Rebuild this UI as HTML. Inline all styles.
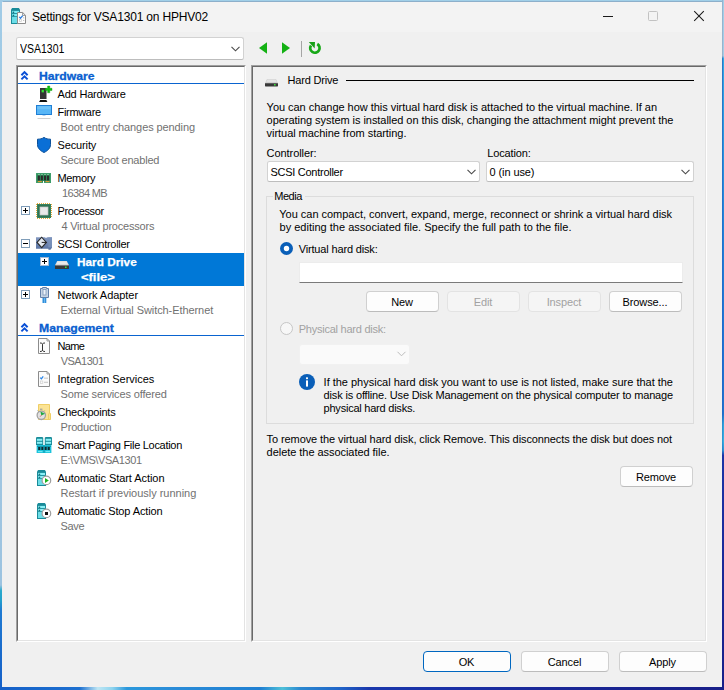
<!DOCTYPE html>
<html lang="en">
<head>
<meta charset="utf-8">
<title>Settings for VSA1301 on HPHV02</title>
<style>
html,body{margin:0;padding:0;}
body{width:724px;height:690px;overflow:hidden;position:relative;background:#1d59c0;font-family:"Liberation Sans",sans-serif;font-size:11px;color:#000;}
.a,.t,.s,.b,svg{position:absolute;}
svg{overflow:visible;}
#dtop{left:0;top:0;width:724px;height:3px;background:linear-gradient(180deg,#a0cfe8 0,#a0cfe8 1px,#8dafca 1px,#8dafca 2px);}
#dleft{left:0;top:0;width:3px;height:690px;background:linear-gradient(180deg,#a0cbe6 0%,#a3c8e2 50%,#9cc3e0 84.8%,#2aa9cc 85.6%,#22a0cc 87%,#1f7ad2 88.5%,#1a6ccc 94%,#1560c8 100%);}
#dright{left:722px;top:0;width:1px;height:690px;background:linear-gradient(180deg,#93b4d0 0%,#98b4cc 8.1%,#2a78c6 8.5%,#2272cc 30%,#1f68cc 52%,#206ac8 60%,#2c90d0 61.5%,#2c98d4 64%,#2880cc 65.3%,#1c34a6 66%,#1a2a9a 80%,#181f88 100%);}
#dright2{left:723px;top:0;width:1px;height:690px;background:linear-gradient(180deg,#a0cfe8 0%,#a4cce6 8.1%,#2eaae6 8.5%,#2a98e0 20%,#2080d8 36%,#1f74d2 52%,#2074cc 60%,#30a4dc 61.5%,#38b0e0 64%,#2a90d4 65.3%,#1c34a6 66%,#1a2a9a 80%,#181f88 100%);}
#dbot{left:0;top:686px;width:724px;height:4px;background:linear-gradient(90deg,#1560c8 0%,#1d70d0 11%,#bfe6f4 13.5%,#8fd4ee 15.5%,#2b98dc 17.5%,#2a8cd8 24%,#2080d2 36%,#4fc0d8 39%,#2a88d0 41.5%,#2064c8 47%,#1a38ac 51%,#1a30a6 62%,#1a2898 75%,#181f88 100%);}
#win{left:2px;top:2px;width:720px;height:685px;background:#f0f0f0;}
#tbar{left:2px;top:2px;width:720px;height:30px;background:#f3f3f3;}
.t{white-space:nowrap;line-height:13px;height:13px;}
.s{white-space:nowrap;line-height:13px;height:13px;color:#717171;}
.hd{color:#0a5fd0;font-weight:bold;-webkit-text-stroke:0.3px #0a5fd0;}
.sunk{box-sizing:border-box;border:1px solid;border-color:#a0a0a0 #fff #fff #a0a0a0;}
.sunk>i{position:absolute;left:0;top:0;right:0;bottom:0;border:1px solid;border-color:#696969 #e3e3e3 #e3e3e3 #696969;}
.b{box-sizing:border-box;border:1px solid #d0d0d0;border-bottom-color:#bcbcbc;border-radius:4px;background:#fdfdfd;text-align:center;line-height:19px;padding-top:1px;padding-right:1px;height:21px;white-space:nowrap;letter-spacing:-0.12px;}
.b.dis{color:#a2a2a2;background:#f5f5f5;border-color:#e3e3e3;}
.cb{box-sizing:border-box;border:1px solid #d2d2d2;border-bottom-color:#bdbdbd;border-radius:2.5px;background:#fff;}
</style>
</head>
<body>
<div id="dtop" class="a"></div><div id="dleft" class="a"></div><div id="dright" class="a"></div><div id="dright2" class="a"></div><div id="dbot" class="a"></div>
<div id="win" class="a"></div>
<div id="tbar" class="a"></div>

<!-- VM combo -->
<div class="a cb" style="left:16px;top:37px;width:228px;height:23px;"></div>

<!-- tree panel -->
<div class="a sunk" style="left:16px;top:65px;width:230px;height:577px;background:#fff;"><i></i></div>
<div class="a" style="left:18px;top:253px;width:226px;height:33px;background:#0078d7;"></div>
<div class="a" style="left:18px;top:83px;width:226px;height:1px;background:#0a64d0;"></div>
<div class="a" style="left:18px;top:335px;width:226px;height:1px;background:#0a64d0;"></div>

<!-- right panel -->
<div class="a sunk" style="left:251px;top:65px;width:456px;height:577px;"><i></i></div>
<div class="a" style="left:346px;top:80px;width:348px;height:1px;background:#000;"></div>
<div class="a cb" style="left:267px;top:161px;width:213px;height:21px;"></div>
<div class="a cb" style="left:486px;top:161px;width:208px;height:21px;"></div>

<div class="a" style="left:266px;top:196px;width:428px;height:228px;box-sizing:border-box;border:1px solid #dcdcdc;"></div>
<div class="a" style="left:273px;top:190px;width:32px;height:13px;background:#f0f0f0;"></div>
<div class="a" style="left:299px;top:262px;width:384px;height:21px;box-sizing:border-box;background:#fff;border:1px solid #ececec;border-bottom:1px solid #7a7a7a;"></div>
<div class="b" style="left:366px;top:291px;width:73px;">New</div>
<div class="b dis" style="left:447px;top:291px;width:73px;">Edit</div>
<div class="b dis" style="left:528px;top:291px;width:73px;">Inspect</div>
<div class="b" style="left:609px;top:291px;width:73px;">Browse...</div>
<div class="a" style="left:299px;top:344px;width:111px;height:21px;box-sizing:border-box;border:1px solid #f1f1f1;border-radius:3px;background:#fafafa;"></div>
<div class="b" style="left:620px;top:466px;width:73px;">Remove</div>

<div class="b" style="left:423px;top:651px;width:88px;border-color:#0067c0;">OK</div>
<div class="b" style="left:521px;top:651px;width:88px;">Cancel</div>
<div class="b" style="left:619px;top:651px;width:88px;">Apply</div>

<div class="t" style="left:32px;top:10px;font-size:12px;line-height:15px;height:15px;letter-spacing:-0.181px;">Settings for VSA1301 on HPHV02</div>
<div class="t" style="left:20px;top:42px;font-size:12px;line-height:15px;height:15px;transform:scaleX(0.8736);transform-origin:0 0;">VSA1301</div>
<div class="t hd" style="left:38.6px;top:70px;transform:scaleX(1.1050);transform-origin:0 0;">Hardware</div>
<div class="t" style="left:57.5px;top:88px;letter-spacing:-0.184px;">Add Hardware</div>
<div class="t" style="left:57.5px;top:106px;letter-spacing:-0.316px;">Firmware</div>
<div class="s" style="left:60.5px;top:121px;letter-spacing:-0.096px;">Boot entry changes pending</div>
<div class="t" style="left:57.5px;top:139px;letter-spacing:-0.129px;">Security</div>
<div class="s" style="left:60.5px;top:154px;letter-spacing:-0.213px;">Secure Boot enabled</div>
<div class="t" style="left:57.5px;top:172px;letter-spacing:-0.337px;">Memory</div>
<div class="s" style="left:62px;top:187px;letter-spacing:-0.643px;">16384 MB</div>
<div class="t" style="left:57.5px;top:205px;letter-spacing:-0.357px;">Processor</div>
<div class="s" style="left:61.4px;top:220px;letter-spacing:-0.210px;">4 Virtual processors</div>
<div class="t" style="left:57.5px;top:238px;letter-spacing:-0.281px;">SCSI Controller</div>
<div class="t" style="left:77.3px;top:256px;color:#fff;font-weight:bold;-webkit-text-stroke:0.25px #fff;transform:scaleX(1.0731);transform-origin:0 0;">Hard Drive</div>
<div class="t" style="left:80.6px;top:271px;color:#fff;font-weight:bold;-webkit-text-stroke:0.25px #fff;transform:scaleX(1.1760);transform-origin:0 0;">&lt;file&gt;</div>
<div class="t" style="left:57.5px;top:289px;letter-spacing:-0.055px;">Network Adapter</div>
<div class="s" style="left:60.5px;top:304px;letter-spacing:-0.075px;">External Virtual Switch-Ethernet</div>
<div class="t hd" style="left:39.0px;top:322px;transform:scaleX(1.1110);transform-origin:0 0;">Management</div>
<div class="t" style="left:57.5px;top:340px;letter-spacing:-0.661px;">Name</div>
<div class="s" style="left:60.7px;top:355px;letter-spacing:-0.526px;">VSA1301</div>
<div class="t" style="left:57.5px;top:373px;letter-spacing:-0.026px;">Integration Services</div>
<div class="s" style="left:60.5px;top:388px;letter-spacing:-0.140px;">Some services offered</div>
<div class="t" style="left:57.5px;top:406px;letter-spacing:-0.239px;">Checkpoints</div>
<div class="s" style="left:60.5px;top:421px;letter-spacing:-0.169px;">Production</div>
<div class="t" style="left:57.5px;top:439px;letter-spacing:-0.291px;">Smart Paging File Location</div>
<div class="s" style="left:60.5px;top:454px;letter-spacing:-0.409px;">E:\VMS\VSA1301</div>
<div class="t" style="left:57.5px;top:472px;letter-spacing:-0.056px;">Automatic Start Action</div>
<div class="s" style="left:60.5px;top:487px;letter-spacing:-0.019px;">Restart if previously running</div>
<div class="t" style="left:57.5px;top:505px;letter-spacing:-0.125px;">Automatic Stop Action</div>
<div class="s" style="left:60.5px;top:520px;letter-spacing:-0.343px;">Save</div>
<div class="t" style="left:287.5px;top:74px;letter-spacing:-0.187px;">Hard Drive</div>
<div class="t" style="left:266.6px;top:101px;letter-spacing:-0.036px;">You can change how this virtual hard disk is attached to the virtual machine. If an</div>
<div class="t" style="left:266.6px;top:114px;letter-spacing:-0.049px;">operating system is installed on this disk, changing the attachment might prevent the</div>
<div class="t" style="left:266.6px;top:127px;letter-spacing:-0.047px;">virtual machine from starting.</div>
<div class="t" style="left:266.6px;top:147px;letter-spacing:-0.067px;">Controller:</div>
<div class="t" style="left:487.3px;top:147px;letter-spacing:-0.138px;">Location:</div>
<div class="t" style="left:270.5px;top:166px;letter-spacing:-0.274px;">SCSI Controller</div>
<div class="t" style="left:489.6px;top:166px;letter-spacing:-0.105px;">0 (in use)</div>
<div class="t" style="left:274.2px;top:190px;letter-spacing:-0.432px;">Media</div>
<div class="t" style="left:279.3px;top:208px;letter-spacing:-0.023px;">You can compact, convert, expand, merge, reconnect or shrink a virtual hard disk</div>
<div class="t" style="left:279.5px;top:221px;letter-spacing:0.014px;">by editing the associated file. Specify the full path to the file.</div>
<div class="t" style="left:298.7px;top:243px;letter-spacing:-0.157px;">Virtual hard disk:</div>
<div class="t" style="left:298.7px;top:323px;color:#a2a2a2;letter-spacing:-0.237px;">Physical hard disk:</div>
<div class="t" style="left:323.6px;top:376px;letter-spacing:-0.013px;">If the physical hard disk you want to use is not listed, make sure that the</div>
<div class="t" style="left:323.6px;top:389px;letter-spacing:-0.157px;">disk is offline. Use Disk Management on the physical computer to manage</div>
<div class="t" style="left:323.6px;top:402px;letter-spacing:-0.229px;">physical hard disks.</div>
<div class="t" style="left:266.6px;top:433px;letter-spacing:-0.097px;">To remove the virtual hard disk, click Remove. This disconnects the disk but does not</div>
<div class="t" style="left:266.6px;top:446px;letter-spacing:-0.046px;">delete the associated file.</div>
<!-- title icon -->
<svg style="left:11px;top:8px" width="16" height="16" viewBox="0 0 16 16">
<path d="M1.2 0h6.6L9 1.4V16H0V1.4z" fill="#1a8b99"/>
<rect x="1" y="2.9" width="7" height="2.2" fill="#7cecf4"/>
<rect x="1" y="6" width="7" height="2.2" fill="#7cecf4"/>
<rect x="1" y="9" width="7" height="6" fill="#6bdde7"/>
<rect x="1.6" y="3.6" width="1.6" height="1.5" fill="#15707c"/><rect x="1.6" y="6.7" width="1.6" height="1.5" fill="#15707c"/>
<path d="M6.5 4.5h5.2L14.5 7.3v8.2H6.5z" fill="#fdfdfd" stroke="#8b8b8b" stroke-width="1"/>
<path d="M11.6 4.7v2.7h2.7" fill="none" stroke="#8b8b8b" stroke-width="0.9"/>
<path d="M8.3 8.8l1.2 1.4 2.2-2.6" fill="none" stroke="#2b7de0" stroke-width="1.3"/>
<rect x="8.6" y="11.4" width="2" height="2" fill="none" stroke="#c9c9c9" stroke-width="0.7"/>
<rect x="12.2" y="9.3" width="1" height="1" fill="#b5b5b5"/><rect x="12.2" y="12" width="1" height="1" fill="#b5b5b5"/>
</svg>

<!-- window controls -->
<div class="a" style="left:603px;top:16px;width:10px;height:1px;background:#1a1a1a;"></div>
<div class="a" style="left:648px;top:11px;width:10px;height:10px;box-sizing:border-box;border:1px solid #c2c2c2;border-radius:1.5px;"></div>
<svg style="left:694px;top:11px" width="10" height="10" viewBox="0 0 10 10"><path d="M0.2 0.2L9.8 9.8M9.8 0.2L0.2 9.8" stroke="#1a1a1a" stroke-width="1.05" fill="none"/></svg>

<!-- vm combo chevron -->
<svg style="left:231px;top:46px" width="9" height="6" viewBox="0 0 9 6"><path d="M0.5 0.8L4.5 4.8L8.5 0.8" stroke="#4a4a4a" stroke-width="1.1" fill="none"/></svg>

<!-- nav arrows -->
<svg style="left:259px;top:42px" width="8" height="12" viewBox="0 0 8 12"><path d="M8 0.3V11.7L0 6z" fill="#14b114"/></svg>
<svg style="left:282px;top:42px" width="8" height="12" viewBox="0 0 8 12"><path d="M0 0.3V11.7L8 6z" fill="#14b114"/></svg>
<div class="a" style="left:301px;top:41px;width:1px;height:16px;background:#a5a5a5;"></div>
<svg style="left:308px;top:41px" width="14" height="14" viewBox="0 0 14 14">
<path d="M9.3 3.0A4.7 4.7 0 1 1 3.0 4.4" fill="none" stroke="#18a818" stroke-width="2.7"/>
<path d="M0.8 1H7L6.7 7.4z" fill="#18a018"/>
</svg>

<!-- chevrons -->
<svg style="left:21px;top:71px" width="7" height="9" viewBox="0 0 7 9"><path d="M0.4 4.2L3.5 1.1L6.6 4.2M0.4 8.4L3.5 5.3L6.6 8.4" fill="none" stroke="#0a50d6" stroke-width="2"/></svg>
<svg style="left:21px;top:323px" width="7" height="9" viewBox="0 0 7 9"><path d="M0.4 4.2L3.5 1.1L6.6 4.2M0.4 8.4L3.5 5.3L6.6 8.4" fill="none" stroke="#0a50d6" stroke-width="2"/></svg>

<!-- add hardware -->
<svg style="left:39px;top:86px" width="13" height="16" viewBox="0 0 13 16" shape-rendering="auto">
<rect x="1" y="2" width="6.5" height="11" fill="#343434"/>
<path d="M0 16L1.2 14H7.4L8.4 16z" fill="#111"/>
<rect x="2.6" y="3.8" width="2.3" height="2.6" fill="#36e236"/>
<path d="M8.6 0h2.2v2.3h2.2v2.2h-2.2v2.3H8.6V4.5H6.3V2.3h2.3z" fill="#0fc00f" stroke="#0a9a0a" stroke-width="0.4"/>
</svg>

<!-- firmware monitor -->
<svg style="left:36px;top:105px" width="16" height="15" viewBox="0 0 16 15">
<rect x="0.5" y="0.5" width="15" height="9" fill="#58b6f6" stroke="#1f7fd6"/>
<rect x="1.2" y="1.2" width="13.6" height="3" fill="#7cc8fa" opacity="0.6"/>
<rect x="6.5" y="10" width="3" height="1" fill="#b9d4ea"/>
<rect x="1.5" y="13" width="13" height="1" fill="#d0d0d0"/>
</svg>

<!-- security shield -->
<svg style="left:37px;top:137px" width="14" height="16" viewBox="0 0 14 16">
<path d="M7 0.4C5.2 1.8 2.8 2.2 0.5 2.2V7.5C0.5 11.5 3.6 13.9 7 15.5C10.4 13.9 13.5 11.5 13.5 7.5V2.2C11.2 2.2 8.8 1.8 7 0.4z" fill="#0a6fd6" stroke="#0a4f98" stroke-width="1"/>
</svg>

<!-- memory -->
<svg style="left:36px;top:173px" width="15" height="10" viewBox="0 0 15 10">
<rect x="0" y="0" width="15" height="10" fill="#2f8e5a"/>
<rect x="0.5" y="0.5" width="14" height="9" fill="none" stroke="#4aa878" stroke-width="0.6"/>
<rect x="1.8" y="2.6" width="2.1" height="4.8" fill="#2b2b2b"/><rect x="4.8" y="2.6" width="2.1" height="4.8" fill="#2b2b2b"/><rect x="8" y="2.6" width="2.1" height="4.8" fill="#2b2b2b"/><rect x="11" y="2.6" width="2.1" height="4.8" fill="#2b2b2b"/>
<rect x="1.8" y="1.2" width="2.1" height="0.8" fill="#8fd0a8"/><rect x="4.8" y="1.2" width="2.1" height="0.8" fill="#8fd0a8"/><rect x="8" y="1.2" width="2.1" height="0.8" fill="#8fd0a8"/><rect x="11" y="1.2" width="2.1" height="0.8" fill="#8fd0a8"/>
<rect x="1.8" y="8.1" width="4" height="1" fill="#f0a030"/><rect x="9.5" y="8.1" width="4" height="1" fill="#f0a030"/>
<rect x="7" y="8" width="1" height="2" fill="#fff"/>
</svg>

<!-- expand boxes -->
<svg style="left:21px;top:206px" width="9" height="9" viewBox="0 0 9 9"><rect x="0.5" y="0.5" width="8" height="8" fill="#fff" stroke="#7f9db9"/><path d="M2 4.5H7M4.5 2V7" stroke="#000" stroke-width="1"/></svg>
<svg style="left:21px;top:239px" width="9" height="9" viewBox="0 0 9 9"><rect x="0.5" y="0.5" width="8" height="8" fill="#fff" stroke="#7f9db9"/><path d="M2 4.5H7" stroke="#000" stroke-width="1"/></svg>
<svg style="left:40px;top:257px" width="9" height="9" viewBox="0 0 9 9"><rect x="0.5" y="0.5" width="8" height="8" fill="#fff" stroke="#9fb8d4"/><path d="M2 4.5H7M4.5 2V7" stroke="#000" stroke-width="1"/></svg>
<svg style="left:21px;top:290px" width="9" height="9" viewBox="0 0 9 9"><rect x="0.5" y="0.5" width="8" height="8" fill="#fff" stroke="#7f9db9"/><path d="M2 4.5H7M4.5 2V7" stroke="#000" stroke-width="1"/></svg>

<!-- processor -->
<svg style="left:36px;top:203px" width="16" height="16" viewBox="0 0 16 16">
<path d="M1 0.5H15M1 15.5H15M0.5 1V15M15.5 1V15" fill="none" stroke="#e8a838" stroke-width="1" stroke-dasharray="1 1"/>
<rect x="1" y="1" width="14" height="14" fill="#2e7353"/>
<rect x="1.5" y="1.5" width="13" height="13" fill="none" stroke="#3f8a66" stroke-width="0.6"/>
<rect x="4" y="4" width="8" height="8" fill="#e9e9e9" stroke="#c4c4c4" stroke-width="0.7"/>
</svg>

<!-- scsi controller -->
<svg style="left:36px;top:237px" width="16" height="13" viewBox="0 0 16 13">
<defs><linearGradient id="gs" x1="0" y1="0" x2="0" y2="1"><stop offset="0" stop-color="#8398c0"/><stop offset="1" stop-color="#5872a2"/></linearGradient></defs>
<path d="M0 0.3H16V10.8L14.4 12.8H12.4V11.8H0z" fill="url(#gs)"/>
<path d="M12.3 0.3H16V10.4H12.3z" fill="#7a92bc" opacity="0.8"/>
<path d="M1 5.4L5.7 0.2L10.4 5.4L5.7 10.6z" fill="#e4e9f1" stroke="#2a2a2a" stroke-width="1.1"/>
<path d="M5.7 5.4H10.6" stroke="#222" stroke-width="1"/>
<rect x="9.2" y="0" width="1.6" height="1" fill="#e8ecf4"/>
</svg>

<!-- hard drive (tree, selected) -->
<svg style="left:55px;top:261px" width="14" height="8" viewBox="0 0 14 8">
<path d="M2.2 0H11.8L14 4.2H0z" fill="#d9d9d9"/>
<path d="M2.6 0.5H11.4L12.6 3H1.4z" fill="#eaeaea"/>
<rect x="0" y="4" width="14" height="4" rx="0.6" fill="#383838"/>
<rect x="0.3" y="4.2" width="13.4" height="0.8" fill="#8a8a8a"/>
<rect x="10" y="5.5" width="1.6" height="1.5" fill="#3ce03c"/>
</svg>

<!-- network adapter -->
<svg style="left:40px;top:287px" width="9" height="16" viewBox="0 0 9 16">
<path d="M2.5 0.5H6.5V1.5H8.5V10.5H0.5V1.5H2.5z" fill="#c6d4e4" stroke="#6380a8" stroke-width="1"/>
<rect x="3" y="2.5" width="3" height="5.5" fill="#eef3f8" stroke="#7c96b8" stroke-width="0.8"/>
<rect x="2.5" y="11" width="3.8" height="5" fill="#2f8fdc"/>
<rect x="4" y="11" width="0.8" height="5" fill="#7fc0f0"/>
</svg>

<!-- name doc -->
<svg style="left:38px;top:338px" width="12" height="16" viewBox="0 0 12 16">
<path d="M0.5 0.5H9L11.5 3V15.5H0.5z" fill="#fbfbfb" stroke="#8c8c8c"/>
<path d="M9 0.5V3H11.5" fill="none" stroke="#8c8c8c" stroke-width="0.8"/>
<path d="M2 5C3.6 5 4.5 5.4 4.5 6.5V12C4.5 13.1 3.6 13.5 2 13.5M7 5C5.4 5 4.5 5.4 4.5 6.5M4.5 12C4.5 13.1 5.4 13.5 7 13.5" fill="none" stroke="#333" stroke-width="1"/>
</svg>

<!-- integration services doc -->
<svg style="left:38px;top:371px" width="12" height="16" viewBox="0 0 12 16">
<path d="M0.5 0.5H9L11.5 3V15.5H0.5z" fill="#fbfbfb" stroke="#8c8c8c"/>
<path d="M9 0.5V3H11.5" fill="none" stroke="#8c8c8c" stroke-width="0.8"/>
<path d="M2.2 6.6L3.4 7.8L5.2 5.4" fill="none" stroke="#2b86e8" stroke-width="1.3"/>
<rect x="6" y="6.7" width="4" height="0.9" fill="#bdbdbd"/>
<rect x="2.4" y="10" width="2.4" height="2.4" fill="none" stroke="#cfcfcf" stroke-width="0.7"/>
<rect x="6" y="10.8" width="4" height="0.9" fill="#bdbdbd"/>
</svg>

<!-- checkpoints -->
<svg style="left:36px;top:404px" width="15" height="17" viewBox="0 0 15 17">
<path d="M2.5 0.5H13.5V9.5H14.5V15.5H2.5z" fill="#fbe394" stroke="#edc95a" stroke-width="0.9"/>
<path d="M12.6 9.5V15.5" stroke="#edc95a" stroke-width="0.9"/>
<path d="M4 5.2H6.4M1.6 6.6L2.6 7.6M8.6 6.6L7.8 7.4" stroke="#8a94a4" stroke-width="1"/>
<circle cx="5.3" cy="11.3" r="4.2" fill="#e2e2e2" stroke="#a2a2a2" stroke-width="1.3"/>
<path d="M5.3 11.6L4.4 7.4L9 9.8z" fill="#1fa83f"/>
<path d="M5.3 11.3L4.2 12.6" stroke="#e03030" stroke-width="0.8"/>
</svg>

<!-- smart paging -->
<svg style="left:36px;top:437px" width="16" height="16" viewBox="0 0 16 16">
<path d="M0.8 0H6.4L7.2 0.8V8H0V0.8z" fill="#1a8b99"/><path d="M9.6 0H15.2L16 0.8V8H8.8V0.8z" fill="#1a8b99"/>
<rect x="0.9" y="1.8" width="5.4" height="2" fill="#8af0f6"/><rect x="0.9" y="4.8" width="5.4" height="2" fill="#8af0f6"/>
<rect x="9.7" y="1.8" width="5.4" height="2" fill="#8af0f6"/><rect x="9.7" y="4.8" width="5.4" height="2" fill="#8af0f6"/>
<rect x="0.6" y="8" width="14.8" height="8" fill="#1cc3dc"/>
<rect x="2.2" y="10" width="2.2" height="3" fill="#0c2a30"/><rect x="5.3" y="10" width="2.2" height="3" fill="#0c2a30"/><rect x="8.5" y="10" width="2.2" height="3" fill="#0c2a30"/><rect x="11.6" y="10" width="2.2" height="3" fill="#0c2a30"/>
<rect x="1" y="9" width="14" height="0.8" fill="#0f8fa3"/>
<rect x="2" y="14.2" width="4.5" height="0.9" fill="#8af0f6"/><rect x="9.5" y="14.2" width="4.5" height="0.9" fill="#8af0f6"/>
<rect x="7.6" y="8" width="0.8" height="8" fill="#0f8fa3"/>
</svg>

<!-- auto start -->
<svg style="left:37px;top:470px" width="15" height="16" viewBox="0 0 15 16">
<path d="M1.2 0H7.8L9 1.4V16H0V1.4z" fill="#1a8b99"/>
<rect x="1" y="2.9" width="7" height="2.2" fill="#8af0f6"/><rect x="1" y="6" width="7" height="2.2" fill="#8af0f6"/><rect x="1" y="9" width="7" height="6" fill="#6bdde7"/>
<rect x="1.6" y="3.6" width="1.6" height="1.5" fill="#15707c"/><rect x="1.6" y="6.7" width="1.6" height="1.5" fill="#15707c"/>
<circle cx="9.4" cy="10.4" r="4.3" fill="#fff" stroke="#9e9e9e" stroke-width="1.2"/>
<path d="M8 7.9V12.9L11.8 10.4z" fill="#19b219"/>
</svg>

<!-- auto stop -->
<svg style="left:37px;top:503px" width="15" height="16" viewBox="0 0 15 16">
<path d="M1.2 0H7.8L9 1.4V16H0V1.4z" fill="#1a8b99"/>
<rect x="1" y="2.9" width="7" height="2.2" fill="#8af0f6"/><rect x="1" y="6" width="7" height="2.2" fill="#8af0f6"/><rect x="1" y="9" width="7" height="6" fill="#6bdde7"/>
<rect x="1.6" y="3.6" width="1.6" height="1.5" fill="#15707c"/><rect x="1.6" y="6.7" width="1.6" height="1.5" fill="#15707c"/>
<circle cx="9.4" cy="10.4" r="4.3" fill="#fff" stroke="#9e9e9e" stroke-width="1.2"/>
<rect x="8" y="9" width="3" height="3" fill="#111"/>
</svg>

<!-- hard drive (header) -->
<svg style="left:265px;top:79px" width="13" height="8" viewBox="0 0 13 8">
<path d="M2 0H11L13 4.2H0z" fill="#d2d2d2"/>
<path d="M2.4 0.5H10.6L11.6 3H1.4z" fill="#e4e4e4"/>
<rect x="0" y="4" width="13" height="3.4" rx="0.6" fill="#383838"/>
<rect x="0.3" y="4.1" width="12.4" height="0.6" fill="#777"/>
<rect x="9" y="5" width="1.6" height="1.5" fill="#3ce03c"/>
</svg>

<!-- combo chevrons -->
<svg style="left:467px;top:169px" width="9" height="6" viewBox="0 0 9 6"><path d="M0.5 0.8L4.5 4.8L8.5 0.8" stroke="#4a4a4a" stroke-width="1.1" fill="none"/></svg>
<svg style="left:681px;top:169px" width="9" height="6" viewBox="0 0 9 6"><path d="M0.5 0.8L4.5 4.8L8.5 0.8" stroke="#4a4a4a" stroke-width="1.1" fill="none"/></svg>
<svg style="left:397px;top:351px" width="9" height="6" viewBox="0 0 9 6"><path d="M0.5 0.8L4.5 4.8L8.5 0.8" stroke="#bcbcbc" stroke-width="1" fill="none"/></svg>

<!-- radios -->
<svg style="left:280px;top:242.4px" width="13" height="13" viewBox="0 0 13 13"><circle cx="6.5" cy="6.5" r="6.5" fill="#0a5fb8"/><circle cx="6.5" cy="6.5" r="2.7" fill="#fff"/></svg>
<svg style="left:280px;top:322px" width="13" height="13" viewBox="0 0 13 13"><circle cx="6.5" cy="6.5" r="6" fill="#f7f7f7" stroke="#c6c6c6" stroke-width="1"/></svg>

<!-- info icon -->
<svg style="left:299px;top:374px" width="16" height="16" viewBox="0 0 16 16"><circle cx="8" cy="8" r="8" fill="#0a5fb8"/><rect x="7" y="3.2" width="2" height="2" rx="0.6" fill="#fff"/><rect x="7" y="6.4" width="2" height="6.2" fill="#fff"/></svg>

</body>
</html>
